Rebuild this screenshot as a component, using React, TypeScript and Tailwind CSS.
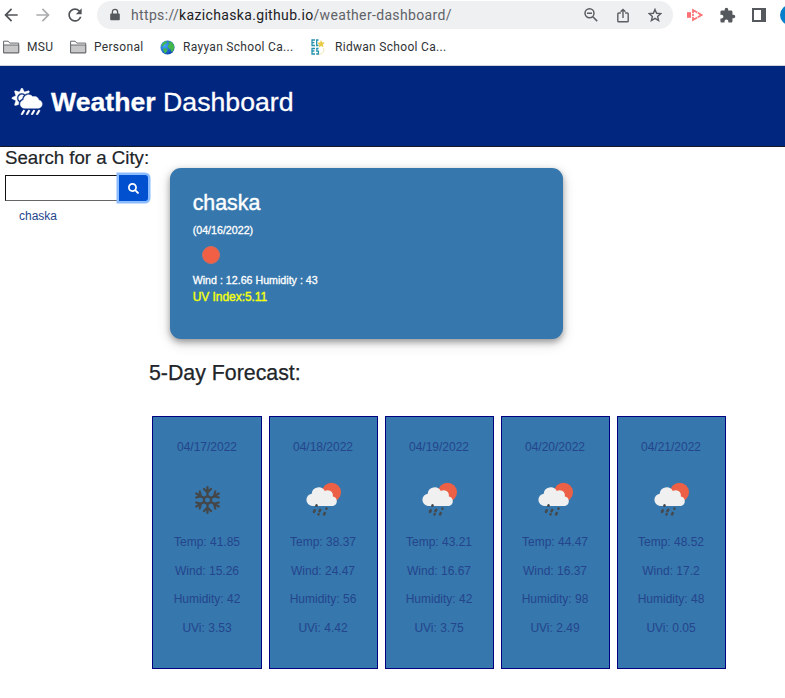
import React from "react";
import { FaCloudSunRain, FaSearch } from "react-icons/fa";
import { MdArrowBack, MdArrowForward, MdRefresh, MdExtension } from "react-icons/md";

const days = [
  { date: "04/17/2022", snow: true, temp: "41.85", wind: "15.26", humidity: "42", uvi: "3.53" },
  { date: "04/18/2022", snow: false, temp: "38.37", wind: "24.47", humidity: "56", uvi: "4.42" },
  { date: "04/19/2022", snow: false, temp: "43.21", wind: "16.67", humidity: "42", uvi: "3.75" },
  { date: "04/20/2022", snow: false, temp: "44.47", wind: "16.37", humidity: "98", uvi: "2.49" },
  { date: "04/21/2022", snow: false, temp: "48.52", wind: "17.2", humidity: "48", uvi: "0.05" },
];

function Folder() {
  return (
    <svg width="17" height="14" viewBox="0 0 17 14" className="shrink-0">
      <path d="M.6 12.8V1.2h4.6l1.6 1.9h8.9v9.7Z" fill="#fff" stroke="#66696c" strokeWidth="1" />
      <path d="M.6 5h15.1v7.8H.6Z" fill="#c8c8c8" stroke="#66696c" strokeWidth="1" />
    </svg>
  );
}

function Globe() {
  return (
    <svg width="15" height="15" viewBox="0 0 15 15" className="shrink-0">
      <defs>
        <radialGradient id="sea" cx=".3" cy=".35" r=".7">
          <stop offset="0" stopColor="#45a8f8" />
          <stop offset="1" stopColor="#0b48b5" />
        </radialGradient>
      </defs>
      <circle cx="7.5" cy="7.5" r="7" fill="url(#sea)" />
      <path d="M3 2.7 5.8 1l1.4 1-1 1.4-1.7.8-1 1.5-2 .7.3-1.9ZM8.3 1.2l3.2.8 2.4 3 .3 3.2-1.5 3.2-1.6.4-.5-2.6-2-.9-.9-2 1-1.7 1.5-.5-1.6-1.2ZM3.6 8l2.7.6 1.3 1.5-1.1 1.6-.9 1.9-1.3-1.2-.8-2.2Z" fill="#43b84a" />
    </svg>
  );
}

function SchoolLogo() {
  return (
    <svg width="16" height="17" viewBox="0 0 16 17" className="shrink-0">
      <path d="M4 1H1v5.5h3M1 3.7h2.4M7.5 1H5.7v5.5h1.8M4 9.5H1V15h3M1 12h2.4M7.5 9.5H5.8v2.7h1.6V15H5.2" fill="none" stroke="#2492ad" strokeWidth="1.3" />
      <path d="m10 .7.9 2.6 3 .4-2.1 1.8.7 2.8L10 6.9 7.8 8.5l.5-2.8-2.2-1.9 3-.4Z" fill="#e8ca43" />
      <path d="M12.5 9q1.8 5-4.6 6.6" fill="none" stroke="#f3e8b0" strokeWidth="1" />
    </svg>
  );
}

function Snowflake() {
  return (
    <svg width="54" height="54" viewBox="0 0 54 54" fill="none" stroke="#454647" strokeWidth="2.2" strokeLinecap="round">
      {[0, 60, 120, 180, 240, 300].map((a) => (
        <path key={a} transform={`rotate(${a} 27.5 27)`} d="M27.5 23.4V14M24 16l3.5 3.4L31 16" />
      ))}
      <path d="m27.5 23 3.5 2v4l-3.5 2-3.5-2v-4Z" />
    </svg>
  );
}

function SunShower() {
  return (
    <svg width="54" height="54" viewBox="-1 0 54 54">
      <circle cx="34.5" cy="19.2" r="9.5" fill="#ec6046" />
      <path d="M15 33a6.2 6.2 0 0 1-.3-12.3A7 7 0 0 1 27.8 18a5.3 5.3 0 0 1 8 5.4A4.9 4.9 0 0 1 36 33Z" fill="#f0f0f0" />
      <g stroke="#45494c" strokeWidth="2.5" strokeLinecap="round">
        <path d="m19.6 32.3-.2.5M17.7 37.4l-.7 1.5M23.2 36.8l-.7 1.5M21.6 41.2l-.1.2M29.5 35.5l-.1.2M27.8 40l-.7 1.4" />
      </g>
    </svg>
  );
}

function ZoomOut() {
  return (
    <svg width="14" height="14" viewBox="0 0 14 14" fill="none" stroke="#5b5e62" strokeWidth="1.5" className="shrink-0">
      <circle cx="5.5" cy="5.3" r="4.5" />
      <path d="m8.8 8.7 4.4 4.4M3 5.3h5" />
    </svg>
  );
}

function Share() {
  return (
    <svg width="12" height="15" viewBox="0 0 12 15" fill="none" stroke="#5b5e62" strokeWidth="1.4" className="shrink-0">
      <path d="M3.8 5H1.7q-.9 0-.9.9v7q0 .9.9.9h8.6q.9 0 .9-.9v-7q0-.9-.9-.9H8.2M6 10V1.6M3.6 3.8 6 1.4l2.4 2.4" />
    </svg>
  );
}

function Star() {
  return (
    <svg width="14" height="14" viewBox="0 0 14 14" fill="none" stroke="#5b5e62" strokeWidth="1.4" className="shrink-0">
      <path d="m7 1.4 1.6 3.9 4.2.3-3.2 2.8 1 4.2L7 10.4l-3.6 2.2 1-4.2-3.2-2.8 4.2-.3Z" />
    </svg>
  );
}

export default function App() {
  return (
    <div className="h-[698px] w-[785px] overflow-hidden bg-white font-['Liberation_Sans',Arial,sans-serif] text-[#212529]">
      <div className="flex h-[65px] flex-col font-[Roboto,sans-serif] text-[#5f6368]">
        <div className="flex h-[30px] items-center">
          <MdArrowBack className="ml-px size-5 shrink-0 text-[#505357]" />
          <MdArrowForward className="ml-3 size-5 shrink-0 text-[#aaacae]" />
          <MdRefresh className="ml-3 size-5 shrink-0 text-[#505357]" />
          <div className="ml-[12px] flex h-7 w-[576px] shrink-0 items-center rounded-full bg-[#eff0f2] pl-[11px]">
            <svg width="14" height="14" viewBox="0 0 14 14" className="shrink-0">
              <path d="M3 5.6h8q.8 0 .8.8v5q0 .8-.8.8H3q-.8 0-.8-.8v-5q0-.8.8-.8Z" fill="#55585d" />
              <path d="M4.4 6V3.9a2.6 2.6 0 0 1 5.2 0V6" fill="none" stroke="#55585d" strokeWidth="1.3" />
            </svg>
            <span className="ml-[9px] w-[453px] whitespace-nowrap text-[14px] tracking-[0.34px]">
              https://<span className="text-[#202124]">kazichaska.github.io</span>/weather-dashboard/
            </span>
            <ZoomOut />
            <span className="ml-[19px] flex"><Share /></span>
            <span className="ml-[19px] flex"><Star /></span>
          </div>
          <svg width="17" height="14" viewBox="0 0 17 14" className="ml-[14px] shrink-0" fill="none" stroke="#fa7075" strokeWidth="1.7">
            <path d="M0 4.2h4v5.6H0Z" fill="#fa7075" stroke="none" />
            <path d="M6 5.2V2l4.2 2.4M10.8 4.8 14.6 7l-3.8 2.2M10.2 9.6 6 12V8.8M6 6v2" />
          </svg>
          <MdExtension className="ml-[15px] size-[17px] shrink-0 text-[#55585d]" />
          <svg width="14" height="14" viewBox="0 0 14 14" className="ml-[16px] shrink-0">
            <path d="M0 0h14v14H0Z" fill="#55585d" />
            <path d="M2 2h7v10H2Z" fill="#fff" />
          </svg>
          <div className="ml-[14px] size-[20px] shrink-0 rounded-full bg-[#087fcb]" />
        </div>
        <div className="flex h-[34px] items-center pl-[3px] text-[12px] tracking-[0.3px] text-[#303336]">
          <Folder />
          <span className="ml-[7px] w-[36px]">MSU</span>
          <span className="ml-[7px] flex"><Folder /></span>
          <span className="ml-[7px] w-[59px]">Personal</span>
          <span className="ml-[7px] flex"><Globe /></span>
          <span className="ml-[8px] w-[120px] whitespace-nowrap">Rayyan School Ca...</span>
          <span className="ml-[8px] flex"><SchoolLogo /></span>
          <span className="ml-[8px] whitespace-nowrap">Ridwan School Ca...</span>
        </div>
      </div>
      <header className="flex h-[82px] items-start border-t border-b border-t-[#d0d3d8] border-b-[#111827] bg-[#00267f] pl-[11px] pt-[20px] text-white">
        <FaCloudSunRain className="mt-[2px] h-[27px] w-[32px] shrink-0" stroke="white" strokeWidth="9" />
        <h1 className="ml-[8px] whitespace-nowrap text-[26.67px] leading-[32px] [-webkit-text-stroke:0.3px]">
          <b>Weather</b> Dashboard
        </h1>
      </header>
      <main className="flex">
        <aside className="w-[149px] shrink-0 pl-[5px]">
          <h2 className="whitespace-nowrap text-[18.67px] leading-[22px] [-webkit-text-stroke:0.2px]">Search for a City:</h2>
          <div className="mt-[6px] flex h-[26px] w-[143px]">
            <input className="h-[26px] w-[114px] border border-r-0 border-t-[#111] border-l-[#111] border-b-[#666] bg-white outline-none" />
            <button className="flex w-[29px] items-center justify-center rounded-r-[3px] bg-[#0050d0] text-white shadow-[0_0_0_2.5px_#8bbcff]">
              <FaSearch className="size-[11px]" />
            </button>
          </div>
          <p className="ml-[14px] mt-[7px] text-[12px] leading-4 text-[#24458c]">chaska</p>
        </aside>
        <div className="pt-[21px]">
          <section className="ml-[21px] h-[171px] w-[393px] rounded-[11px] bg-[#3677ad] pl-[22.7px] pt-[22px] text-white shadow-[0_3px_6px_rgba(0,0,0,0.32),0_4px_14px_rgba(0,0,0,0.16)]">
            <h3 className="text-[21.33px] leading-[26px] [-webkit-text-stroke:0.4px]">chaska</h3>
            <p className="mt-[8px] text-[10.67px] leading-[13px] [-webkit-text-stroke:0.3px]">(04/16/2022)</p>
            <div className="mt-[5px] mb-[6px] ml-[9px] flex h-[26px] items-center">
              <div className="size-[18px] rounded-full border border-[#cf6c5f] bg-[#f16045]" />
            </div>
            <p className="text-[10.67px] leading-[13px] [-webkit-text-stroke:0.3px]">Wind : 12.66 Humidity : 43</p>
            <p className="mt-[2px] text-[12px] leading-[16px] tracking-[-0.05px] text-[#f4ff10] [-webkit-text-stroke:0.4px]">UV Index:5.11</p>
          </section>
          <h2 className="mt-[21px] whitespace-nowrap text-[21.33px] leading-[26px] [-webkit-text-stroke:0.25px]">5-Day Forecast:</h2>
          <div className="ml-[3px] mt-[30px] flex gap-[7px]">
            {days.map((d) => (
              <article
                key={d.date}
                className="flex h-[253px] w-[109px] flex-col items-center border border-[#000080] bg-[#3677ad] pr-px pt-[22px] text-[12px] leading-4 text-[#24458c] first:w-[110px] first:pr-0"
              >
                <p>{d.date}</p>
                <div className="mt-[18px] h-[54px]">{d.snow ? <Snowflake /> : <SunShower />}</div>
                <div className="mt-[7px] flex flex-col items-center gap-[12.7px]">
                  <p>Temp: {d.temp}</p>
                  <p>Wind: {d.wind}</p>
                  <p>Humidity: {d.humidity}</p>
                  <p>UVi: {d.uvi}</p>
                </div>
              </article>
            ))}
          </div>
        </div>
      </main>
    </div>
  );
}
